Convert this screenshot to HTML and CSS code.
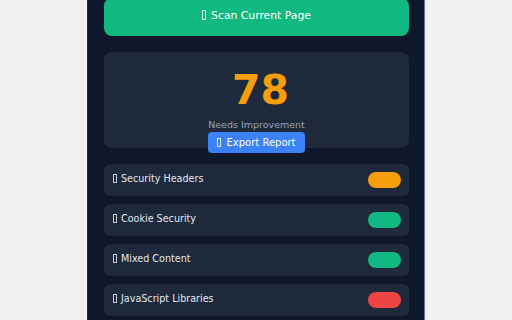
FILE: index.html
```html
<!DOCTYPE html>
<html lang="en">
<head>
  <meta charset="UTF-8" />
  <meta name="viewport" content="width=device-width, initial-scale=1.0" />
  <title>Security Scanner</title>
  <link rel="stylesheet" href="styles.css">
</head>
<body>
  <div class="popup">
    <button class="scan-btn"><span class="tofu"></span>Scan Current Page</button>

    <div class="score-card">
      <div class="score">78</div>
      <div class="score-label">Needs Improvement</div>
      <button class="export-btn"><span class="tofu"></span>Export Report</button>
    </div>

    <ul class="checks">
      <li class="check"><span><span class="tofu"></span>Security Headers</span><span class="pill warn"></span></li>
      <li class="check"><span><span class="tofu"></span>Cookie Security</span><span class="pill good"></span></li>
      <li class="check"><span><span class="tofu"></span>Mixed Content</span><span class="pill good"></span></li>
      <li class="check"><span><span class="tofu"></span>JavaScript Libraries</span><span class="pill bad"></span></li>
    </ul>
  </div>
</body>
</html>
```

FILE: styles.css
```css
body {
  font-family: "DejaVu Sans", sans-serif;
  background-color: #f0f0f0;
  display: flex;
  justify-content: center;
  margin: 0;
  height: 100vh;
  overflow: hidden;
}
.popup {
  width: 305px;
  background-color: #0f172a;
  border-left: 1px solid #1e2a5a;
  border-right: 1px solid #64748b;
  padding: 0 15px 0 16px;
}
/* placeholder box where the emoji glyph is missing */
.tofu {
  display: inline-block;
  width: 2px;
  height: 7px;
  border: 1px solid currentColor;
  opacity: 0.85;
  margin-right: 5px;
  vertical-align: -1px;
}
.scan-btn {
  display: block;
  width: 100%;
  height: 38px;
  margin-top: -2px;
  padding-bottom: 4px;
  border: none;
  border-radius: 8px;
  background-color: #10b981;
  color: #fff;
  font-family: inherit;
  font-size: 10.8px;
  cursor: pointer;
}
.scan-btn .tofu {
  height: 8px;
}
.score-card {
  margin-top: 16px;
  height: 96px;
  background-color: #1e293b;
  border-radius: 8px;
  text-align: center;
}
.score {
  padding: 16px 0 0 8px;
  font-size: 41px;
  font-weight: bold;
  line-height: 44px;
  color: #f59e0b;
}
.score-label {
  margin-top: 7px;
  font-size: 9.5px;
  color: #94a3b8;
  line-height: 12px;
}
.export-btn {
  display: inline-block;
  width: 97px;
  height: 21px;
  margin-top: -1px;
  border: none;
  border-radius: 4px;
  background-color: #3b82f6;
  color: #fff;
  font-family: inherit;
  font-size: 10px;
  padding: 0;
}
.checks {
  list-style: none;
  margin: 16px 0 0;
  padding: 0;
  display: flex;
  flex-direction: column;
  gap: 8px;
}
.check {
  height: 32px;
  display: flex;
  align-items: center;
  justify-content: space-between;
  padding: 0 8px 3px 9px;
  box-sizing: border-box;
  background-color: #1e293b;
  border-radius: 6px;
  color: #e2e8f0;
  font-size: 9.6px;
}
.check .tofu {
  margin-right: 4px;
}
.pill {
  width: 33px;
  height: 16px;
  border-radius: 8px;
  margin-top: 3px;
}
.warn { background-color: #f59e0b; }
.good { background-color: #10b981; }
.bad { background-color: #ef4444; }
```
